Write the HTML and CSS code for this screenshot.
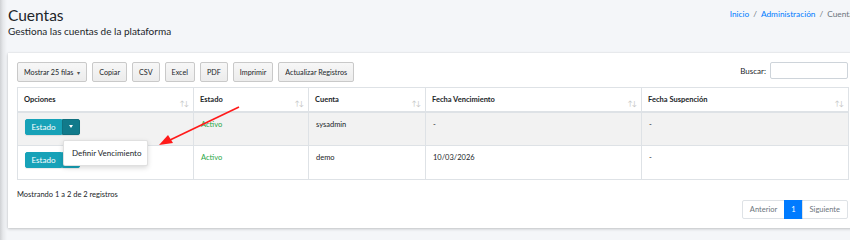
FILE: index.html
```html
<!DOCTYPE html>
<html lang="es">
<head>
<meta charset="utf-8">
<title>Cuentas</title>
<link rel="stylesheet" href="styles.css">
</head>
<body>
<div class="page">
  <header class="content-header">
    <div class="titles">
      <h1 class="title">Cuentas</h1>
      <p class="subtitle">Gestiona las cuentas de la plataforma</p>
    </div>
    <nav class="breadcrumb">
      <a href="#">Inicio</a><span class="sep">/</span><a href="#">Administración</a><span class="sep">/</span><span class="current">Cuentas</span>
    </nav>
  </header>

  <section class="card">
    <div class="toolbar">
      <div class="buttons">
        <button class="dt-btn">Mostrar 25 filas <span class="mini-caret">▾</span></button>
        <button class="dt-btn">Copiar</button>
        <button class="dt-btn">CSV</button>
        <button class="dt-btn">Excel</button>
        <button class="dt-btn">PDF</button>
        <button class="dt-btn">Imprimir</button>
        <button class="dt-btn">Actualizar Registros</button>
      </div>
      <label class="search">Buscar: <input class="search-input" type="text"></label>
    </div>

    <div class="table-wrap">
      <table class="grid">
        <colgroup>
          <col class="c1"><col class="c2"><col class="c3"><col class="c4"><col class="c5">
        </colgroup>
        <thead>
          <tr>
            <th>Opciones<span class="sort"><i>↑</i><i>↓</i></span></th>
            <th>Estado<span class="sort"><i>↑</i><i>↓</i></span></th>
            <th>Cuenta<span class="sort"><i>↑</i><i>↓</i></span></th>
            <th>Fecha Vencimiento<span class="sort"><i>↑</i><i>↓</i></span></th>
            <th>Fecha Suspención<span class="sort"><i>↑</i><i>↓</i></span></th>
          </tr>
        </thead>
        <tbody>
          <tr class="odd">
            <td>
              <div class="btn-group open">
                <button class="btn-estado">Estado</button><button class="btn-toggle active"><span class="caret"></span></button>
                <div class="dropdown-menu">Definir Vencimiento</div>
              </div>
            </td>
            <td class="ok">Activo</td>
            <td>sysadmin</td>
            <td>-</td>
            <td>-</td>
          </tr>
          <tr>
            <td>
              <div class="btn-group">
                <button class="btn-estado">Estado</button><button class="btn-toggle"><span class="caret"></span></button>
              </div>
            </td>
            <td class="ok">Activo</td>
            <td>demo</td>
            <td>10/03/2026</td>
            <td>-</td>
          </tr>
        </tbody>
      </table>
      <svg class="annot" width="100" height="50" viewBox="0 0 100 50">
        <line x1="81" y1="1" x2="12" y2="34" stroke="#ff1a1a" stroke-width="1.6"/>
        <polygon points="1,39 10,29 15,37" fill="#ff1a1a"/>
      </svg>
    </div>

    <div class="footer-row">
      <div class="info">Mostrando 1 a 2 de 2 registros</div>
      <ul class="pagination">
        <li class="pg">Anterior</li>
        <li class="pg active">1</li>
        <li class="pg">Siguiente</li>
      </ul>
    </div>
  </section>
</div>
</body>
</html>
```

FILE: styles.css
```css
html, body {
  margin: 0;
  padding: 0;
  overflow: hidden;
}
body {
  width: 850px;
  height: 240px;
  background: linear-gradient(to right, #cfd1d4 0, #e6e8eb 3px, #f4f6f9 7px) #f4f6f9;
  font-family: "Lato", "Liberation Sans", sans-serif;
  color: #212529;
}
.page {
  width: 849px;
  margin-left: 8px;
}
.content-header {
  display: flex;
  justify-content: space-between;
  align-items: flex-start;
  padding-top: 5px;
  height: 48px;
}
.title {
  margin: 0;
  font-size: 15.5px;
  line-height: 20px;
  font-weight: 400;
  color: #212529;
}
.subtitle {
  margin: 0;
  font-size: 10px;
  line-height: 13px;
  color: #212529;
}
.breadcrumb {
  font-size: 8.3px;
  line-height: 12px;
  padding-top: 3px;
  white-space: nowrap;
  color: #6c757d;
}
.breadcrumb a {
  color: #007bff;
  text-decoration: none;
}
.breadcrumb .sep {
  padding: 0 4px;
  color: #6c757d;
}
.card {
  background: #fff;
  box-shadow: 0 0 1px rgba(0,0,0,.125), 0 1px 3px rgba(0,0,0,.2);
  padding: 9px 9px 9px 9px;
  height: 175px;
  box-sizing: border-box;
}
.toolbar {
  display: flex;
  justify-content: space-between;
  align-items: flex-start;
  height: 20px;
}
.buttons {
  display: flex;
  gap: 5px;
}
.dt-btn {
  font-family: inherit;
  font-size: 7.2px;
  height: 20px;
  padding: 0 6px;
  margin: 0;
  color: #212529;
  background: linear-gradient(to bottom, #f7f7f7 0, #ececec 100%);
  border: 1px solid #c9c9c9;
  border-radius: 2px;
  white-space: nowrap;
}
.mini-caret {
  font-size: 6px;
  color: #555;
  padding-left: 2px;
}
.search {
  font-size: 8px;
  color: #212529;
  display: flex;
  align-items: center;
  gap: 4px;
}
.search-input {
  width: 78px;
  height: 17px;
  box-sizing: border-box;
  border: 1px solid #ced4da;
  border-radius: 2px;
  margin: 0;
  padding: 0 4px;
}
.table-wrap {
  position: relative;
  margin-top: 5px;
}
.grid {
  width: 831px;
  border-collapse: collapse;
  table-layout: fixed;
  font-size: 7.5px;
}
.c1 { width: 176px; }
.c2 { width: 115px; }
.c3 { width: 117px; }
.c4 { width: 216px; }
.c5 { width: 207px; }
.grid th, .grid td {
  border: 1px solid #dee2e6;
  text-align: left;
  box-sizing: border-box;
}
.grid th {
  position: relative;
  height: 24px;
  padding: 0 6px;
  font-weight: 700;
  border-bottom: 2px solid #dee2e6;
  vertical-align: middle;
  line-height: 12px;
  padding-top: 2px;
}
.sort {
  position: absolute;
  right: 5px;
  top: 9px;
  font-size: 7px;
  letter-spacing: -1px;
  color: #c4c4c4;
  font-weight: 400;
}
.sort i {
  font-style: normal;
}
.grid td {
  height: 34px;
  padding: 6px 7px 0;
  vertical-align: top;
  line-height: 12px;
}
.grid tr.odd td {
  background: #f2f2f2;
}
.ok {
  color: #28a745;
}
.btn-group {
  position: relative;
  display: inline-flex;
  margin-top: 0;
}
.btn-estado, .btn-toggle {
  font-family: inherit;
  font-size: 8px;
  height: 16px;
  border: 1px solid #17a2b8;
  background: #17a2b8;
  color: #fff;
  margin: 0;
}
.btn-estado {
  width: 37px;
  padding: 0;
  border-radius: 2px 0 0 2px;
}
.btn-toggle {
  width: 18px;
  padding: 0;
  border-radius: 0 2px 2px 0;
  display: flex;
  align-items: center;
  justify-content: center;
}
.btn-toggle.active {
  background: #117a8b;
  border-color: #10707f;
}
.caret {
  width: 0;
  height: 0;
  border-left: 2.5px solid transparent;
  border-right: 2.5px solid transparent;
  border-top: 3px solid #fff;
}
.btn-estado, .btn-toggle {
  box-shadow: 0 1px 1px rgba(0,0,0,.08);
}
.dropdown-menu {
  position: absolute;
  left: 38px;
  top: 21px;
  width: 85px;
  height: 26px;
  box-sizing: border-box;
  padding: 0 0 0 8px;
  display: flex;
  align-items: center;
  background: #fff;
  border: 1px solid rgba(0,0,0,.12);
  border-radius: 2px;
  box-shadow: 0 2px 5px rgba(0,0,0,.15);
  font-size: 8px;
  color: #212529;
  white-space: nowrap;
  z-index: 2;
}
.annot {
  position: absolute;
  left: 141px;
  top: 19px;
  z-index: 3;
}
.footer-row {
  display: flex;
  justify-content: space-between;
  align-items: flex-start;
  margin-top: 8px;
}
.info {
  font-size: 7.5px;
  line-height: 14px;
}
.pagination {
  list-style: none;
  margin: 12px 0 0;
  padding: 0;
  display: flex;
}
.pg {
  height: 19px;
  box-sizing: border-box;
  padding: 0 7px;
  border: 1px solid #dee2e6;
  margin-left: -1px;
  font-size: 7.5px;
  color: #6c757d;
  display: flex;
  align-items: center;
}
.pg:first-child {
  border-radius: 2px 0 0 2px;
}
.pg:last-child {
  border-radius: 0 2px 2px 0;
}
.pg.active {
  background: #007bff;
  border-color: #007bff;
  color: #fff;
  padding: 0 6px;
}
```
